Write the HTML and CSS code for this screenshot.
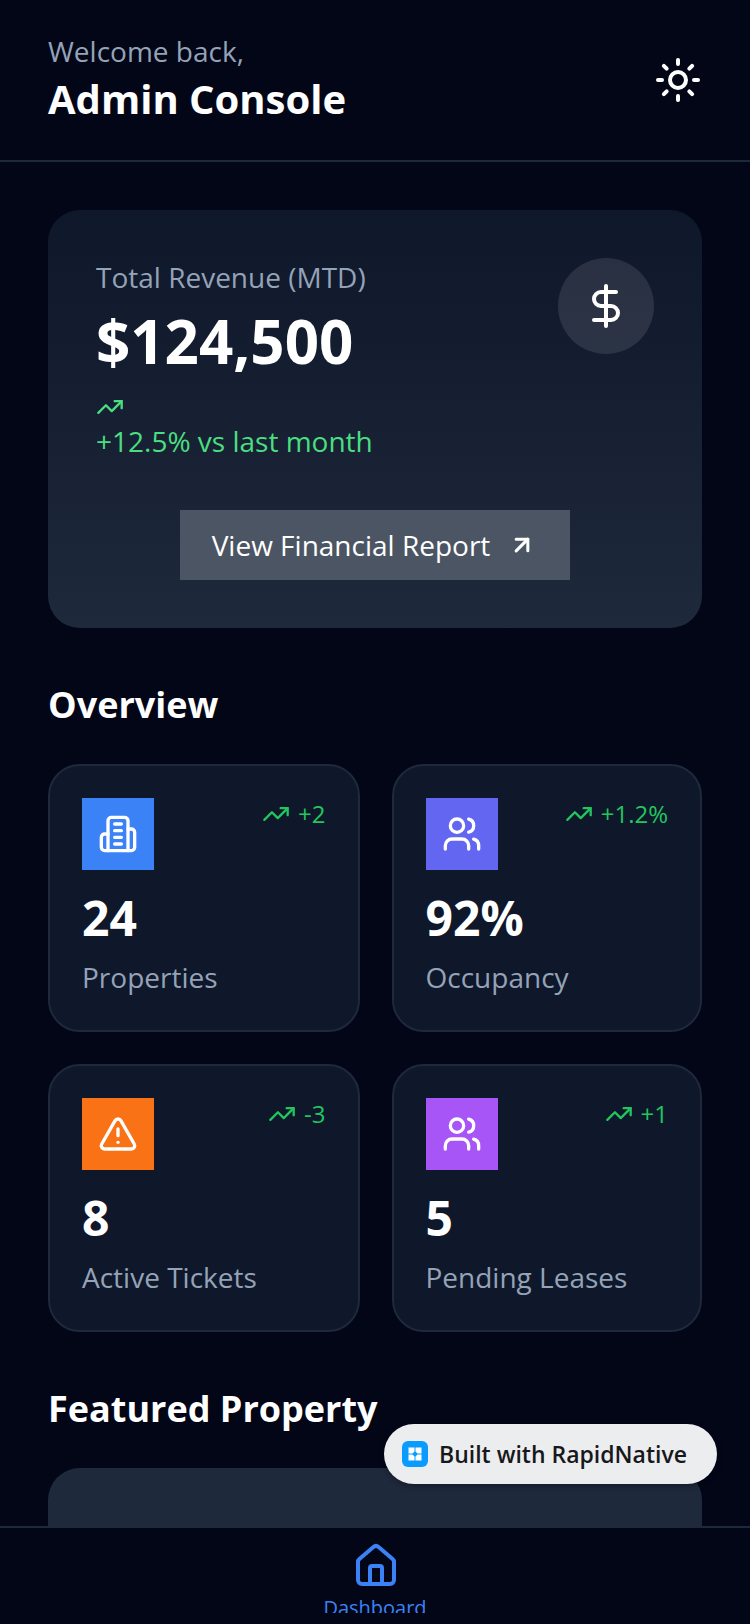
FILE: index.html
```html
<!DOCTYPE html>
<html lang="en">
<head>
    <meta charset="UTF-8">
    <meta name="viewport" content="width=device-width, initial-scale=1.0">
    <title>Admin Console</title>
    <link rel="stylesheet" href="styles.css">
</head>
<body>
    <svg class="icon-defs" width="0" height="0">
        <symbol id="i-trend" viewBox="0 0 24 24"><path d="M16 7h6v6"/><path d="m22 7-8.5 8.5-5-5L2 17"/></symbol>
        <symbol id="i-users" viewBox="0 0 24 24"><path d="M16 21v-2a4 4 0 0 0-4-4H6a4 4 0 0 0-4 4v2"/><circle cx="9" cy="7" r="4"/><path d="M22 21v-2a4 4 0 0 0-3-3.87"/><path d="M16 3.13a4 4 0 0 1 0 7.75"/></symbol>
    </svg>

    <header class="top-bar">
        <div>
            <p class="welcome">Welcome back,</p>
            <h1 class="console-title">Admin Console</h1>
        </div>
        <svg class="icon sun-icon" viewBox="0 0 24 24"><circle cx="12" cy="12" r="4"/><path d="M12 2v2"/><path d="M12 20v2"/><path d="m4.93 4.93 1.41 1.41"/><path d="m17.66 17.66 1.41 1.41"/><path d="M2 12h2"/><path d="M20 12h2"/><path d="m6.34 17.66-1.41 1.41"/><path d="m19.07 4.93-1.41 1.41"/></svg>
    </header>

    <main class="content">
        <section class="revenue-card">
            <div class="revenue-top">
                <div>
                    <p class="revenue-label">Total Revenue (MTD)</p>
                    <p class="revenue-value">$124,500</p>
                    <svg class="icon revenue-trend"><use href="#i-trend"/></svg>
                    <p class="revenue-change">+12.5% vs last month</p>
                </div>
                <div class="dollar-circle">
                    <svg class="icon dollar-icon" viewBox="0 0 24 24"><line x1="12" x2="12" y1="2" y2="22"/><path d="M17 5H9.5a3.5 3.5 0 0 0 0 7h5a3.5 3.5 0 0 1 0 7H6"/></svg>
                </div>
            </div>
            <a class="report-button">
                <span>View Financial Report</span>
                <svg class="icon report-arrow" viewBox="0 0 24 24"><path d="M7 7h10v10"/><path d="M7 17 17 7"/></svg>
            </a>
        </section>

        <h2 class="section-title">Overview</h2>
        <div class="stat-grid">
            <div class="stat-card">
                <div class="stat-top">
                    <div class="stat-icon blue">
                        <svg class="icon" viewBox="0 0 24 24"><path d="M6 22V4a2 2 0 0 1 2-2h8a2 2 0 0 1 2 2v18Z"/><path d="M6 12H4a2 2 0 0 0-2 2v6a2 2 0 0 0 2 2h2"/><path d="M18 9h2a2 2 0 0 1 2 2v9a2 2 0 0 1-2 2h-2"/><path d="M10 6h4"/><path d="M10 10h4"/><path d="M10 14h4"/><path d="M10 18h4"/></svg>
                    </div>
                    <div class="stat-delta"><svg class="icon"><use href="#i-trend"/></svg><span>+2</span></div>
                </div>
                <p class="stat-value">24</p>
                <p class="stat-label">Properties</p>
            </div>
            <div class="stat-card">
                <div class="stat-top">
                    <div class="stat-icon indigo"><svg class="icon"><use href="#i-users"/></svg></div>
                    <div class="stat-delta"><svg class="icon"><use href="#i-trend"/></svg><span>+1.2%</span></div>
                </div>
                <p class="stat-value">92%</p>
                <p class="stat-label">Occupancy</p>
            </div>
            <div class="stat-card">
                <div class="stat-top">
                    <div class="stat-icon orange">
                        <svg class="icon" viewBox="0 0 24 24"><path d="m21.73 18-8-14a2 2 0 0 0-3.48 0l-8 14A2 2 0 0 0 4 21h16a2 2 0 0 0 1.73-3Z"/><path d="M12 9v4"/><path d="M12 17h.01"/></svg>
                    </div>
                    <div class="stat-delta"><svg class="icon"><use href="#i-trend"/></svg><span>-3</span></div>
                </div>
                <p class="stat-value">8</p>
                <p class="stat-label">Active Tickets</p>
            </div>
            <div class="stat-card">
                <div class="stat-top">
                    <div class="stat-icon purple"><svg class="icon"><use href="#i-users"/></svg></div>
                    <div class="stat-delta"><svg class="icon"><use href="#i-trend"/></svg><span>+1</span></div>
                </div>
                <p class="stat-value">5</p>
                <p class="stat-label">Pending Leases</p>
            </div>
        </div>

        <h2 class="section-title featured-title">Featured Property</h2>
        <div class="featured-card"></div>
    </main>

    <nav class="bottom-nav">
        <div class="nav-tab">
            <svg class="icon home-icon" viewBox="0 0 24 24"><path d="M15 21v-8a1 1 0 0 0-1-1h-4a1 1 0 0 0-1 1v8"/><path d="M3 10a2 2 0 0 1 .709-1.528l7-5.999a2 2 0 0 1 2.582 0l7 5.999A2 2 0 0 1 21 10v9a2 2 0 0 1-2 2H5a2 2 0 0 1-2-2z"/></svg>
            <span class="nav-label">Dashboard</span>
        </div>
    </nav>

    <div class="built-badge">
        <svg class="badge-logo" viewBox="0 0 26 26">
            <rect width="26" height="26" rx="6" fill="#0a9bff"/>
            <path d="M6.500 6.500h6v4l-2 2h-4z M13.500 6.500h6v6h-4l-2-2z M6.500 13.500h4l2 2v4h-6z M15.500 13.500h4v6h-6v-4z" fill="#fff"/>
        </svg>
        <span>Built with RapidNative</span>
    </div>
</body>
</html>
```

FILE: styles.css
```css
* {
    box-sizing: border-box;
}
html, body {
    margin: 0;
    height: 1624px;
}
body {
    position: relative;
    display: flex;
    flex-direction: column;
    overflow: hidden;
    background-color: #020617;
    color: white;
    font-family: "Open Sans", sans-serif;
}
p, h1, h2 {
    margin: 0;
}
.icon-defs {
    position: absolute;
}
.icon {
    fill: none;
    stroke: currentColor;
    stroke-width: 2;
    stroke-linecap: round;
    stroke-linejoin: round;
}

/* Header */
.top-bar {
    height: 162px;
    flex-shrink: 0;
    display: flex;
    justify-content: space-between;
    align-items: center;
    padding: 0 48px 2px;
    border-bottom: 2px solid #1e293b;
}
.welcome {
    font-size: 28px;
    line-height: 40px;
    color: #94a3b8;
}
.console-title {
    font-size: 40px;
    line-height: 56px;
    font-weight: 700;
}
.sun-icon {
    width: 48px;
    height: 48px;
    margin-top: 2px;
}

/* Main */
.content {
    flex: 1;
    min-height: 0;
    overflow: hidden;
    padding: 48px 48px 0;
}
.revenue-card {
    height: 418px;
    padding: 47px 48px 48px;
    border-radius: 32px;
    background: linear-gradient(180deg, #0f172a, #1e293b);
}
.revenue-top {
    display: flex;
    justify-content: space-between;
    align-items: flex-start;
}
.revenue-label {
    font-size: 28px;
    line-height: 40px;
    color: #94a3b8;
}
.revenue-value {
    margin-top: 3px;
    font-size: 60px;
    line-height: 82px;
    font-weight: 700;
}
.revenue-trend {
    display: block;
    width: 28px;
    height: 28px;
    margin-top: 11px;
    color: #4ade80;
}
.revenue-change {
    font-size: 28px;
    line-height: 40px;
    color: #4ade80;
}
.dollar-circle {
    width: 96px;
    height: 96px;
    margin-top: 1px;
    display: flex;
    justify-content: center;
    align-items: center;
    border-radius: 50%;
    background-color: rgba(255, 255, 255, 0.1);
}
.dollar-icon {
    width: 48px;
    height: 48px;
}
.report-button {
    width: 390px;
    height: 70px;
    margin: 49px auto 0;
    display: flex;
    justify-content: center;
    align-items: center;
    gap: 18px;
    background-color: #4b5563;
    font-size: 28px;
}
.report-arrow {
    width: 28px;
    height: 28px;
    margin-right: 2px;
    stroke-width: 2.6;
}

/* Overview */
.section-title {
    margin-top: 49px;
    font-size: 36px;
    line-height: 56px;
    font-weight: 700;
}
.stat-grid {
    display: grid;
    grid-template-columns: 311.5px 310.5px;
    gap: 32px;
    margin-top: 31px;
}
.stat-card {
    height: 268px;
    padding: 32px;
    border: 2px solid #1e293b;
    border-radius: 32px;
    background-color: #0f172a;
}
.stat-top {
    display: flex;
    justify-content: space-between;
    align-items: flex-start;
}
.stat-icon {
    width: 72px;
    height: 72px;
    display: flex;
    justify-content: center;
    align-items: center;
}
.stat-icon .icon {
    width: 40px;
    height: 40px;
}
.blue { background-color: #3b82f6; }
.indigo { background-color: #6366f1; }
.orange { background-color: #f97316; }
.purple { background-color: #a855f7; }
.stat-delta {
    display: flex;
    align-items: center;
    gap: 8px;
    font-size: 24px;
    line-height: 32px;
    color: #22c55e;
}
.stat-delta .icon {
    width: 28px;
    height: 28px;
}
.stat-value {
    margin-top: 16px;
    font-size: 48px;
    line-height: 64px;
    font-weight: 700;
}
.stat-label {
    margin-top: 7px;
    font-size: 28px;
    line-height: 40px;
    color: #94a3b8;
}
.featured-title {
    margin-top: 49px;
}
.featured-card {
    height: 200px;
    margin-top: 31px;
    border-radius: 32px;
    background-color: #1e293b;
}

/* Bottom tab bar */
.bottom-nav {
    height: 98px;
    flex-shrink: 0;
    padding: 14px 0 11px;
    border-top: 2px solid #1e293b;
    background-color: #020617;
}
.nav-tab {
    height: 100%;
    overflow: hidden;
    display: flex;
    flex-direction: column;
    align-items: center;
    color: #3b82f6;
}
.home-icon {
    width: 48px;
    height: 48px;
    flex-shrink: 0;
    margin-left: 2px;
}
.nav-label {
    margin-top: 4px;
    font-size: 20px;
    line-height: 28px;
}

/* Floating badge */
.built-badge {
    position: absolute;
    left: 384px;
    top: 1424px;
    width: 333px;
    height: 60px;
    display: flex;
    align-items: center;
    gap: 11px;
    padding: 0 0 1px 18px;
    border-radius: 30px;
    background-color: #ecedef;
    box-shadow: 0 2px 6px rgba(0, 0, 0, 0.3);
    color: #18181b;
    font-size: 23px;
    font-weight: 600;
}
.badge-logo {
    width: 26px;
    height: 26px;
}
```
